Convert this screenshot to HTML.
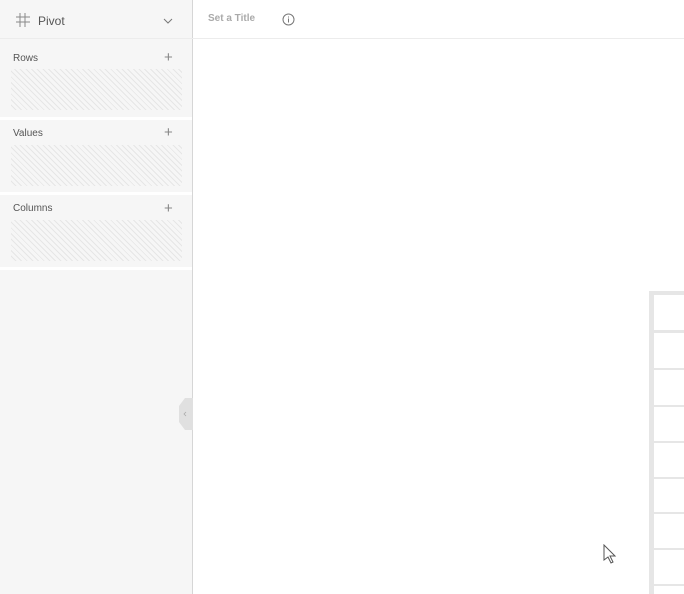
<!DOCTYPE html><html><head><style>
body{margin:0;width:684px;height:594px;background:#fff;font-family:"Liberation Sans",sans-serif;position:relative;overflow:hidden}
.a{position:absolute}
.side{left:0;top:0;width:192px;height:594px;background:#f6f6f6;border-right:1px solid #d6d6d6}
.sep{left:0;width:192px;height:3px;background:#fff}
.lab{font-size:10px;color:#555}
.plus{font-size:15px;color:#888;font-weight:300}
.hat{left:11px;width:171px;height:41px;background:repeating-linear-gradient(45deg,#f6f6f6 0 3px,#e6e6e6 3px 4px)}
.hl{left:649px;width:40px;height:2px;background:#e6e6e6}
</style></head><body>
<div class="a side"></div>
<div class="a" style="left:0;top:38px;width:684px;height:1px;background:#ececec"></div>
<svg class="a" style="left:15px;top:12px" width="16" height="16" viewBox="0 0 16 16" fill="none" stroke="#888" stroke-width="1"><path d="M5 1v14M10 1v14M1 5h14M1 10h14"/></svg>
<div class="a" style="left:38px;top:14px;font-size:12px;color:#555">Pivot</div>
<svg class="a" style="left:163px;top:18px" width="10" height="6" viewBox="0 0 10 6" fill="none" stroke="#777"><path d="M1 1l4 4 4-4"/></svg>
<div class="a" style="left:208px;top:13px;font-size:10px;font-weight:bold;color:#aaa">Set a Title</div>
<svg class="a" style="left:282px;top:13px" width="13" height="13" viewBox="0 0 13 13" fill="none" stroke="#777"><circle cx="6.5" cy="6.5" r="5.5"/><path d="M6.5 5.5v4M6.5 3.5v1"/></svg>
<div class="a lab" style="left:13px;top:53px">Rows</div><div class="a plus" style="left:164px;top:49px">+</div>
<div class="a hat" style="top:69px"></div>
<div class="a sep" style="top:117px"></div>
<div class="a lab" style="left:13px;top:128px">Values</div><div class="a plus" style="left:164px;top:124px">+</div>
<div class="a hat" style="top:145px"></div>
<div class="a sep" style="top:192px"></div>
<div class="a lab" style="left:13px;top:203px">Columns</div><div class="a plus" style="left:164px;top:200px">+</div>
<div class="a hat" style="top:220px"></div>
<div class="a sep" style="top:267px"></div>
<svg class="a" style="left:179px;top:398px" width="14" height="32" viewBox="0 0 14 32"><path d="M14 0H6L0 8v16l6 8h8z" fill="#e0e0e0"/><path d="M7 14l-2 2 2 2" stroke="#aaa" fill="none" stroke-width=".8"/></svg>
<div class="a" style="left:649px;top:291px;width:5px;height:303px;background:#e6e6e6"></div>
<div class="a hl" style="top:291px;height:4px"></div>
<div class="a hl" style="top:330px;height:3px"></div>
<div class="a hl" style="top:368px"></div><div class="a hl" style="top:405px"></div><div class="a hl" style="top:441px"></div><div class="a hl" style="top:477px"></div><div class="a hl" style="top:512px"></div><div class="a hl" style="top:548px"></div><div class="a hl" style="top:584px"></div>
<svg class="a" style="left:603px;top:544px" width="14" height="20" viewBox="0 0 14 20"><path d="M1 1v15l4-3 3 6 2-1-3-6h5z" fill="#fff" stroke="#555" stroke-width="1"/></svg>
</body></html>
